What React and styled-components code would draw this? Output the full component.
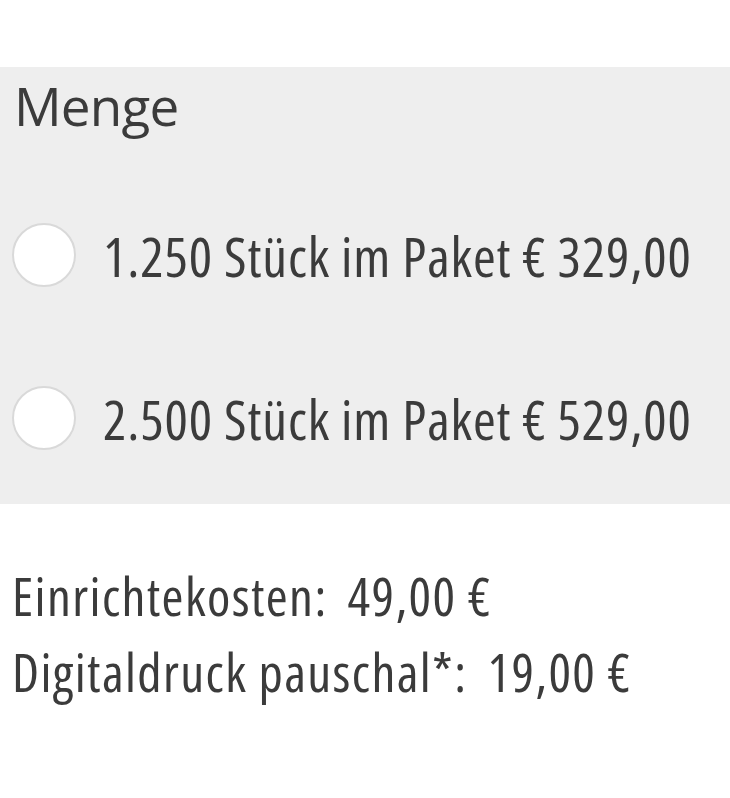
import React, { useState } from 'react'
import styled, { createGlobalStyle } from 'styled-components'

const GlobalStyle = createGlobalStyle`
  body {
    margin: 0;
    background: #ffffff;
    font-family: "Open Sans", "Noto Sans", sans-serif;
    font-stretch: 75%;
    color: #3b3b3b;
  }
`

const options = [
  { id: 'p1250', label: '1.250 Stück im Paket € 329,00' },
  { id: 'p2500', label: '2.500 Stück im Paket € 529,00' },
]

const costs = [
  { label: 'Einrichtekosten:', value: '49,00 €' },
  { label: 'Digitaldruck pauschal*:', value: '19,00 €' },
]

export default function App() {
  const [selected, setSelected] = useState(null)

  return (
    <>
      <GlobalStyle />
      <Page>
        <Panel>
          <Title>Menge</Title>
          <OptionList>
            {options.map((opt) => (
              <Option key={opt.id}>
                <Radio
                  type="radio"
                  name="menge"
                  checked={selected === opt.id}
                  onChange={() => setSelected(opt.id)}
                />
                <OptionText>{opt.label}</OptionText>
              </Option>
            ))}
          </OptionList>
        </Panel>
        <Costs>
          {costs.map((c) => (
            <CostLine key={c.label}>
              {c.label}
              <CostValue>{c.value}</CostValue>
            </CostLine>
          ))}
        </Costs>
      </Page>
    </>
  )
}

const Page = styled.div`
  padding-top: 67px;
`

const Panel = styled.div`
  background: #eeeeee;
  height: 437px;
  box-sizing: border-box;
  padding: 12px 0 0 14px;
`

const Title = styled.div`
  font-size: 53px;
  font-stretch: 100%;
  line-height: 1;
  letter-spacing: -0.8px;
`

const OptionList = styled.div`
  display: flex;
  flex-direction: column;
  gap: 97px;
  margin-top: 90px;
  margin-left: -2px;
`

const Option = styled.label`
  display: flex;
  align-items: center;
  gap: 27px;
  height: 66px;
  white-space: nowrap;
`

const Radio = styled.input`
  appearance: none;
  margin: 0;
  width: 64px;
  height: 64px;
  border-radius: 50%;
  background: #ffffff;
  border: 2px solid #d9d9d9;
  box-sizing: border-box;
  flex-shrink: 0;
  &:checked {
    border: 20px solid #3b3b3b;
  }
`

const OptionText = styled.span`
  font-size: 55px;
  line-height: 1;
  letter-spacing: 0.85px;
`

const Costs = styled.div`
  margin-top: 54px;
  padding-left: 12px;
`

const CostLine = styled.div`
  font-size: 53px;
  line-height: 76px;
  letter-spacing: 1.4px;
  white-space: nowrap;
`

const CostValue = styled.span`
  margin-left: 20px;
`
